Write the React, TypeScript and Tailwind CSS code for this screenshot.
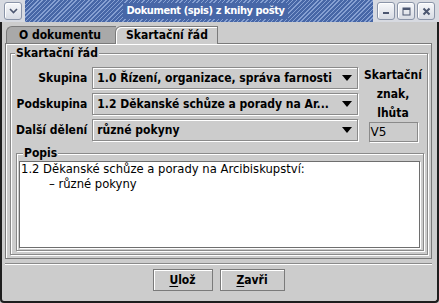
import React from 'react';

const bold = "font-['DejaVu_Sans_Condensed','DejaVu_Sans',sans-serif] font-bold text-[12px]";
const plain = "font-['DejaVu_Sans',sans-serif] text-[11.6px]";

function TitleButton({ children }: { children: React.ReactNode }) {
  return (
    <div className="w-[18px] h-[18px] rounded-[3px] border border-[#8a94a8] bg-[linear-gradient(#f6f7fa,#d8dce4)] shadow-[inset_1px_1px_0_#fff] flex items-center justify-center">
      {children}
    </div>
  );
}

function TitleBar() {
  return (
    <div className="h-[22px] flex items-center bg-[#d7dae1]">
      <div className="w-[25px] h-full flex items-center pl-[4px]">
        <TitleButton>
          <svg width="9" height="6" viewBox="0 0 9 6">
            <path d="M1 1 L4.5 4.5 L8 1" fill="none" stroke="#4b5670" strokeWidth="1.6" />
          </svg>
        </TitleButton>
      </div>
      <div className="flex-1 h-full flex items-center justify-center pl-[13px] bg-[image:repeating-linear-gradient(135deg,#86a0d2_0px,#86a0d2_1px,#4767a7_1px,#4767a7_3px)]">
        <span className="font-['DejaVu_Sans_Condensed','DejaVu_Sans',sans-serif] font-bold text-[11px] tracking-[-0.4px] text-white bg-[#4767a7] px-[3px] leading-[16px]">
          Dokument (spis) z knihy pošty
        </span>
      </div>
      <div className="h-full flex items-center gap-[2px] pl-[4px] pr-[4px]">
        <TitleButton>
          <svg width="8" height="8" viewBox="0 0 8 8">
            <rect x="1" y="5" width="6" height="2" fill="#4b5670" />
          </svg>
        </TitleButton>
        <TitleButton>
          <svg width="9" height="9" viewBox="0 0 9 9">
            <rect x="1" y="1" width="7" height="7" fill="none" stroke="#4b5670" strokeWidth="1" />
            <rect x="1" y="1" width="7" height="2" fill="#4b5670" />
          </svg>
        </TitleButton>
        <TitleButton>
          <svg width="9" height="9" viewBox="0 0 9 9">
            <path d="M1.5 1.5 L7.5 7.5 M7.5 1.5 L1.5 7.5" stroke="#4b5670" strokeWidth="2" />
          </svg>
        </TitleButton>
      </div>
    </div>
  );
}

function Arrow() {
  return (
    <svg width="10" height="6" viewBox="0 0 10 6" className="shrink-0">
      <polygon points="0,0 10,0 5,6" fill="#000" />
    </svg>
  );
}

function Combo({ text }: { text: string }) {
  return (
    <div className="h-[22px] flex items-center bg-[#cccccc] border border-[#8a8a8a] shadow-[inset_1px_1px_0_#fff,1px_1px_0_#fff] pl-[4px] pr-[5px]">
      <span className={`${bold} flex-1 whitespace-nowrap overflow-hidden text-black`}>{text}</span>
      <Arrow />
    </div>
  );
}

function Label({ children }: { children: React.ReactNode }) {
  return <div className={`${bold} h-[22px] flex items-center justify-end text-black whitespace-nowrap`}>{children}</div>;
}

export default function App() {
  return (
    <div className="w-[439px] h-[303px] flex flex-col bg-[#cccccc] overflow-hidden select-none">
      <TitleBar />
      <div className="flex-1 flex flex-col border-x-2 border-b-2 border-[#1e1e1e] rounded-b-[4px] pl-[3px] pr-[5px] pt-[4px] pb-[10px]">
        {/* tabs */}
        <div className="flex h-[17px] pl-[1px]">
          <div className={`${bold} w-[110px] h-[17px] flex items-center pl-[12px] bg-[#a9a9a9] border-t border-l border-[#7a7a7a] rounded-tl-[6px] text-black`}>
            O dokumentu
          </div>
          <div className={`${bold} relative z-10 -ml-[1px] w-[103px] h-[18px] flex items-center pl-[10px] pb-[1px] bg-[#cccccc] border-t border-l border-r border-[#7a7a7a] rounded-tl-[6px] shadow-[inset_1px_1px_0_#fff] text-black`}>
            Skartační řád
          </div>
        </div>

        {/* tab pane */}
        <div className="flex-1 min-h-0 flex flex-col border border-[#7a7a7a] shadow-[inset_1px_1px_0_#fff] pt-[2px] pl-[4px] pr-[3px] pb-[3px]">
          <fieldset className="flex-1 min-h-0 flex flex-col border border-[#8a8a8a] shadow-[inset_1px_1px_0_#fff,1px_1px_0_#fff] pl-[5px] pr-[3px] pb-[3px]">
            <legend className={`${bold} ml-[-1px] px-[1px] leading-[14px] bg-[#cccccc] text-black`}>Skartační řád</legend>

            <div className="flex pt-[6px]">
              <div className="flex-1 grid grid-cols-[auto_1fr] gap-x-[5px] gap-y-[3px] pt-[1px]">
                <Label>Skupina</Label>
                <Combo text="1.0 Řízení, organizace, správa farnosti" />
                <Label>Podskupina</Label>
                <Combo text="1.2 Děkanské schůze a porady na Ar..." />
                <Label>Další dělení</Label>
                <Combo text="různé pokyny" />
              </div>
              <div className="w-[62px] ml-[4px] flex flex-col items-center">
                <div className={`${bold} leading-[19px] text-center text-black`}>
                  Skartační
                  <br />
                  znak,
                  <br />
                  lhůta
                </div>
                <div className="font-['DejaVu_Sans',sans-serif] text-[12px] w-[49px] h-[20px] mt-[-1px] border border-[#8a8a8a] shadow-[1px_1px_0_#fff] pl-[1px] flex items-center text-black">
                  V5
                </div>
              </div>
            </div>

            <fieldset className="flex-1 min-h-0 mt-[4px] flex flex-col border border-[#8a8a8a] shadow-[inset_1px_1px_0_#fff,1px_1px_0_#fff] pl-[2px] pr-[3px] pb-[2px]">
              <legend className={`${bold} ml-[4px] px-[1px] leading-[14px] bg-[#cccccc] text-black`}>Popis</legend>
              <div className={`${plain} flex-1 min-h-0 mt-[1px] bg-white border border-[#6e6e6e] shadow-[1px_1px_0_#fff] pl-[1px] leading-[15px] text-black`}>
                <div>1.2 Děkanské schůze a porady na Arcibiskupství:</div>
                <div className="pl-[28px]">– různé pokyny</div>
              </div>
            </fieldset>
          </fieldset>
        </div>

        {/* separator */}
        <div className="mt-[4px] border-t border-[#8a8a8a] border-b border-b-white" />

        {/* buttons */}
        <div className="mt-[4px] flex justify-center gap-[7px]">
          <button className={`${bold} w-[60px] h-[22px] border border-[#7a7a7a] bg-[#cccccc] shadow-[inset_1px_1px_0_#fff] text-black`}>
            <span className="underline underline-offset-2">U</span>lož
          </button>
          <button className={`${bold} w-[65px] h-[22px] border border-[#7a7a7a] bg-[#cccccc] shadow-[inset_1px_1px_0_#fff] text-black`}>
            <span className="underline underline-offset-2">Z</span>avři
          </button>
        </div>
      </div>
    </div>
  );
}
